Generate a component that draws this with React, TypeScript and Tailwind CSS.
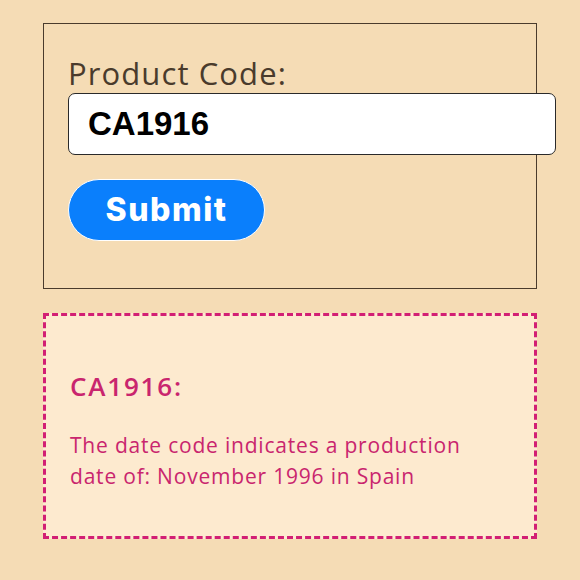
export default function App() {
  return (
    <div className="w-[580px] h-[580px] bg-[#f5dcb5] pt-[23px] px-[43px] font-['Open_Sans',sans-serif]">
      <div className="h-[266px] border border-[#4a3b2c] pt-[29px] pl-[24px]">
        <label className="block text-[31px] leading-[40px] tracking-[1.1px] text-[#4a3b2c]">Product Code:</label>
        <div className="w-[488px] h-[62px] bg-white border-[1.5px] border-[#2a2a2a] rounded-[7px] flex items-center pl-[19px] font-['Liberation_Sans',sans-serif] font-bold text-[33px] text-black">
          CA1916
        </div>
        <button className="mt-[24px] w-[197px] h-[62px] rounded-full bg-[#0a7ffc] border border-white text-white font-['Inter',sans-serif] font-extrabold text-[32px] tracking-[1.5px]">
          Submit
        </button>
      </div>
      <div className="mt-[24px] h-[226px] border-[3px] border-dashed border-[#d21f74] bg-[#fdeacf] pl-[24px] pt-[52px] text-[#c9256e]">
        <div className="text-[26px] leading-[36px] font-semibold tracking-[1.8px]">CA1916:</div>
        <p className="mt-[26px] text-[21px] leading-[31px] tracking-[0.8px] w-[420px]">
          The date code indicates a production date of: November 1996 in Spain
        </p>
      </div>
    </div>
  );
}
